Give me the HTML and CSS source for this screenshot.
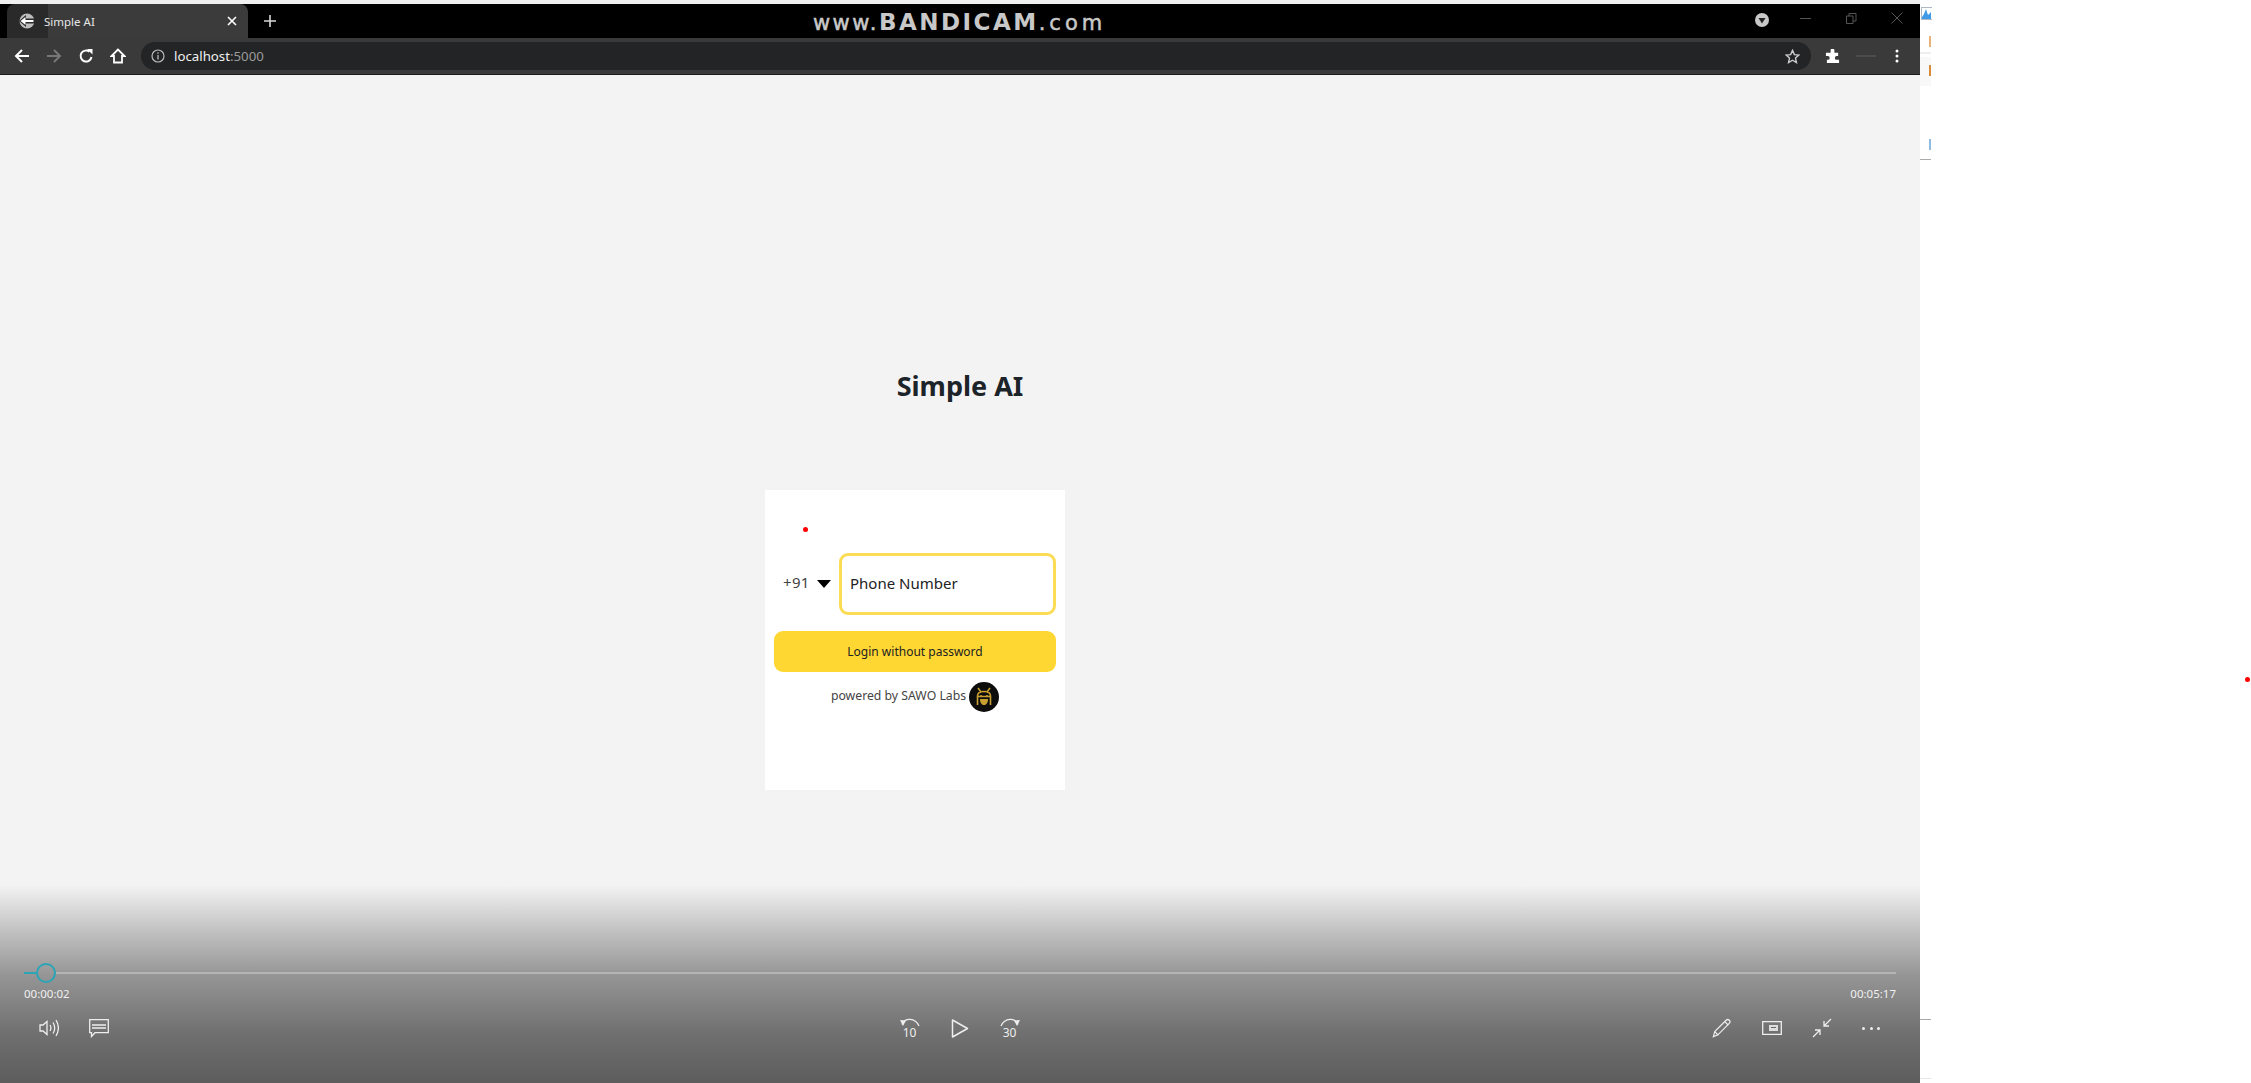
FILE: index.html
```html
<!DOCTYPE html>
<html lang="en">
<head>
    <meta charset="UTF-8">
    <title>Simple AI</title>
    <link rel="stylesheet" href="styles.css">
</head>
<body>
    <div class="screen">
        <div class="topline"></div>
        <div class="tabbar">
            <div class="tab">
                <svg class="tab-icon" width="16" height="16" viewBox="0 0 16 16"><circle cx="8" cy="8" r="7.500" fill="#bdbdbd"/><path d="M16 5.500H7V2L0 8l7 6v-3.500h9z" fill="#2a2a2a"/><path d="M1.500 8 6.500 4v3h8v2h-8v3z" fill="#fff"/></svg>
                <span class="tab-title">Simple AI</span>
                <svg class="tab-close" width="10" height="10" viewBox="0 0 10 10"><path d="M1 1l8 8M9 1 1 9" stroke="#fff" stroke-width="1.600"/></svg>
            </div>
            <svg class="tab-new" width="14" height="14" viewBox="0 0 14 14"><path d="M7 1v12M1 7h12" stroke="#d8d8d8" stroke-width="1.600"/></svg>
            <div class="watermark">www.<b>BANDICAM</b><span class="watermark-end">.com</span></div>
            <div class="win-btns">
                <svg class="win-drop" width="14" height="14" viewBox="0 0 14 14"><circle cx="7" cy="7" r="7" fill="#c8c8c8"/><path d="M3.500 5h7L7 10.500z" fill="#222"/></svg>
                <svg class="win-min" width="11" height="3" viewBox="0 0 11 3"><path d="M0 1.500h11" stroke="#555"/></svg>
                <svg class="win-max" width="11" height="11" viewBox="0 0 11 11"><path d="M.5 3h6.500v7.500H.5zM3 3V.5h7v7.500H7" fill="none" stroke="#555"/></svg>
                <svg class="win-close" width="12" height="12" viewBox="0 0 12 12"><path d="M.5.500l11 11M11.500.5l-11 11" stroke="#555"/></svg>
            </div>
        </div>
        <div class="toolbar">
            <svg class="tool" width="16" height="16" viewBox="0 0 16 16"><path d="M15 8H2M8 2 2 8l6 6" fill="none" stroke="#fff" stroke-width="2"/></svg>
            <svg class="tool" width="16" height="16" viewBox="0 0 16 16"><path d="M1 8h13M8 2l6 6-6 6" fill="none" stroke="#777" stroke-width="2"/></svg>
            <svg class="tool" width="16" height="16" viewBox="0 0 16 16"><path d="M13.500 9A5.500 5.500 0 1 1 11.500 3.700" fill="none" stroke="#fff" stroke-width="2"/><path d="M9 1h5.500v5.500z" fill="#fff"/></svg>
            <svg class="tool" width="16" height="16" viewBox="0 0 16 16"><path d="M8 1.500 1.500 8h2.500v6.500h8V8h2.500z" fill="none" stroke="#fff" stroke-width="1.800"/></svg>
            <div class="omnibox">
                <svg width="14" height="14" viewBox="0 0 14 14"><circle cx="7" cy="7" r="6" fill="none" stroke="#bbb" stroke-width="1.200"/><path d="M7 6v4.500M7 3.200v1.500" stroke="#bbb" stroke-width="1.300"/></svg>
                <span class="url">localhost<span class="url-port">:5000</span></span>
                <svg class="star" width="15" height="15" viewBox="0 0 16 16"><path d="M8 1.500l2 4.500 4.800.500-3.600 3.200 1 4.800L8 12l-4.200 2.500 1-4.800L1.200 6.500 6 6z" fill="none" stroke="#ccc" stroke-width="1.500"/></svg>
            </div>
            <svg class="ext" width="15" height="15" viewBox="0 0 16 16"><path d="M6 1.500a2 2 0 0 1 4 0V4h4v3.500h-1.500a2 2 0 0 0 0 4H15V15H2v-3.500h1a2 2 0 0 0 0-4H1V4h5z" fill="#fff"/></svg>
            <div class="ext-dash"></div>
            <svg class="menu" width="4" height="14" viewBox="0 0 4 14"><circle cx="2" cy="2" r="1.500" fill="#fff"/><circle cx="2" cy="7" r="1.500" fill="#fff"/><circle cx="2" cy="12" r="1.500" fill="#fff"/></svg>
        </div>
        <div class="page">
            <h1 class="title">Simple AI</h1>
            <div class="card">
                <div class="phone-row">
                    <span class="code">+91</span>
                    <span class="arrow"></span>
                    <div class="phone-input">Phone Number</div>
                </div>
                <button class="login">Login without password</button>
                <div class="powered">
                    <span class="powered-text">powered by SAWO Labs</span>
                    <svg width="30" height="30" viewBox="0 0 30 30"><circle cx="15" cy="15" r="15" fill="#0d0d0d"/><path d="M9 6l3 4M21 6l-3 4M8.500 23v-9c0-3 3-4.500 6.500-4.500s6.500 1.500 6.500 4.500v9M8.500 14.500h13M12 13v1M18 13v1" fill="none" stroke="#c9a030" stroke-width="1.600"/><path d="M11 17h8c0 4-2 6-4 6s-4-2-4-6z" fill="#c9a030"/></svg>
                </div>
            </div>
            <span class="pointer-dot pointer-card"></span>
        </div>
        <div class="player">
            <div class="seek">
                <span class="seek-done"></span>
                <span class="seek-thumb"></span>
                <span class="seek-rest"></span>
            </div>
            <div class="times">
                <span>00:00:02</span>
                <span>00:05:17</span>
            </div>
            <div class="controls">
                <div class="ctrl-group">
                    <svg width="20" height="18" viewBox="0 0 20 18"><path d="M1 6h3l4-3.500v13L4 12H1zM11 6c1.200 2 1.200 4 0 6M14 3.500c2.200 3.500 2.200 7.500 0 11M17 1c3 5 3 11 0 16" fill="none" stroke="#eee" stroke-width="1.300"/></svg>
                    <svg width="20" height="19" viewBox="0 0 20 19"><path d="M.7.700h18.600v13H6l-3.500 3.800v-3.800H.7zM3 6h14M3 9h14" fill="none" stroke="#eee" stroke-width="1.300"/></svg>
                </div>
                <div class="ctrl-group ctrl-mid">
                    <div class="skip">
                        <svg width="20" height="9" viewBox="0 0 20 9"><path d="M2 6.500C5-.5 15-.5 19 8" fill="none" stroke="#eee" stroke-width="1.300"/><path d="M0 2l6 .500-3 5.500z" fill="#eee"/></svg>
                        <span>10</span>
                    </div>
                    <svg width="18" height="19" viewBox="0 0 18 19"><path d="M1.500 1 16.500 9.500 1.500 18z" fill="none" stroke="#eee" stroke-width="1.500" stroke-linejoin="round"/></svg>
                    <div class="skip">
                        <svg width="20" height="9" viewBox="0 0 20 9"><path d="M18 6.500C15-.5 5-.5 1 8" fill="none" stroke="#eee" stroke-width="1.300"/><path d="M20 2l-6 .500 3 5.500z" fill="#eee"/></svg>
                        <span>30</span>
                    </div>
                </div>
                <div class="ctrl-group ctrl-right">
                    <svg width="20" height="20" viewBox="0 0 22 22"><path d="M1.500 20.500l1.500-5.500L15.500 2.500c1-1 2.500-1 3.500 0s1 2.500 0 3.500L6.500 18.500zM3 15l4 4M14 4l4 4" fill="none" stroke="#eee" stroke-width="1.300"/></svg>
                    <svg width="20" height="14" viewBox="0 0 20 14"><path d="M.7.700h18.600v12.600H.7z" fill="none" stroke="#eee" stroke-width="1.300"/><path d="M7 4h9v6H7z" fill="#ddd"/><path d="M9 6.500h5" stroke="#666"/></svg>
                    <svg width="20" height="20" viewBox="0 0 20 20"><path d="M19 1l-7 7M12 3v5h5M1 19l7-7M3 12h5v5" fill="none" stroke="#eee" stroke-width="1.300"/></svg>
                    <div class="dots"><i></i><i></i><i></i></div>
                </div>
            </div>
        </div>
    </div>
    <div class="side">
        <div class="side-chart">
            <svg width="9" height="11" viewBox="0 0 9 11"><path d="M0 9 2 6 4 1 6 7 9 4V11H0z" fill="#3f9be8"/></svg>
        </div>
        <span class="side-mark side-orange"></span>
        <div class="side-rule"></div>
        <div class="side-panel">
            <span class="side-mark side-mixed"></span>
        </div>
        <span class="side-mark side-blue"></span>
        <div class="side-line"></div>
        <div class="side-line side-line-low"></div>
        <div class="side-line side-line-end"></div>
    </div>
    <span class="pointer-dot pointer-side"></span>
</body>
</html>
```

FILE: styles.css
```css
* {
    box-sizing: border-box;
}
html, body {
    margin: 0;
    height: 100%;
    overflow: hidden;
}
body {
    display: flex;
    width: 2251px;
    height: 1083px;
    font-family: "Noto Sans", "Open Sans", sans-serif;
    background-color: #fff;
    position: relative;
}
.screen {
    width: 1920px;
    height: 1083px;
    display: flex;
    flex-direction: column;
    position: relative;
    background-color: #f3f3f3;
}
.topline {
    height: 4px;
    background-color: #f0f0f0;
}
.tabbar {
    height: 34px;
    background-color: #000;
    display: flex;
    align-items: flex-start;
    padding-left: 7px;
    position: relative;
}
.tab {
    width: 241px;
    height: 34px;
    background: linear-gradient(to right, #2a2a2a 41px, #3b3b3b 41px);
    border-radius: 8px 8px 0 0;
    display: flex;
    align-items: center;
}
.tab-icon {
    margin-left: 12px;
    flex-shrink: 0;
}
.tab-title {
    margin-left: 9px;
    font-size: 11.5px;
    color: #e6e6e6;
    flex: 1;
}
.tab-close {
    margin-right: 11px;
}
.tab-new {
    margin: 10px 0 0 15px;
}
.watermark {
    position: absolute;
    left: 813px;
    top: 0;
    color: #c8c8c8;
    font-family: "DejaVu Sans", sans-serif;
    font-size: 21px;
    line-height: 36px;
    letter-spacing: 2.4px;
    -webkit-text-stroke: 0.5px #c8c8c8;
    white-space: nowrap;
}
.watermark b {
    font-size: 23px;
    letter-spacing: 2.5px;
    -webkit-text-stroke: 0;
}
.watermark-end {
    letter-spacing: 4px;
}
.win-btns {
    margin-left: auto;
    display: flex;
    align-items: center;
    height: 34px;
}
.win-drop {
    margin: -2px 31px 0 0;
}
.win-min {
    margin: -6px 35px 0 0;
}
.win-max {
    margin: -6px 34px 0 0;
}
.win-close {
    margin: -6px 17px 0 0;
}
.toolbar {
    height: 37px;
    background-color: #3a3a3a;
    border-bottom: 1px solid #1c1c1c;
    display: flex;
    align-items: center;
    padding-left: 14px;
}
.tool {
    margin-right: 16px;
    flex-shrink: 0;
}
.omnibox {
    width: 1670px;
    height: 28px;
    margin-left: -1px;
    background-color: #232425;
    border-radius: 14px;
    display: flex;
    align-items: center;
    padding: 0 11px 0 10px;
    gap: 9px;
}
.url {
    font-size: 13.25px;
    color: #f0f0f0;
}
.url-port {
    color: #9a9a9a;
}
.star {
    margin-left: auto;
}
.ext {
    margin-left: 14px;
}
.ext-dash {
    width: 20px;
    height: 2px;
    margin-left: 16px;
    background-color: #4c4c4c;
}
.menu {
    margin-left: 19px;
}
.page {
    flex: 1;
    position: relative;
    display: flex;
    flex-direction: column;
    padding-top: 292px;
}
.title {
    margin: 0;
    width: 1920px;
    text-align: center;
    font-size: 27px;
    line-height: 38px;
    font-weight: 700;
    color: #1c2329;
}
.card {
    width: 300px;
    height: 300px;
    margin: 85px 0 0 765px;
    background-color: #fff;
    padding: 63px 9px 0;
}
.phone-row {
    display: flex;
    align-items: center;
    height: 62px;
}
.code {
    font-size: 15px;
    color: #444;
    margin: -4px 0 0 9px;
    letter-spacing: 0.3px;
}
.arrow {
    width: 0;
    height: 0;
    margin-left: 7px;
    border-left: 7.5px solid transparent;
    border-right: 7.5px solid transparent;
    border-top: 8px solid #000;
}
.phone-input {
    width: 217px;
    height: 62px;
    margin-left: auto;
    border: 3px solid #fbdc55;
    border-radius: 9px;
    padding: 0 0 2px 8px;
    display: flex;
    align-items: center;
    font-size: 15px;
    color: #222;
}
.login {
    display: block;
    width: 282px;
    height: 41px;
    margin-top: 16px;
    border: none;
    border-radius: 9px;
    background-color: #ffd733;
    font-family: inherit;
    font-size: 12px;
    color: #222;
}
.powered {
    display: flex;
    align-items: center;
    justify-content: center;
    gap: 3px;
    margin-top: 10px;
    font-size: 12.25px;
    color: #444;
}
.powered-text {
    margin-top: -3px;
}
.pointer-dot {
    position: absolute;
    width: 5px;
    height: 5px;
    border-radius: 50%;
    background-color: #f00;
}
.pointer-card {
    left: 803px;
    top: 452px;
}
.pointer-side {
    left: 2245px;
    top: 677px;
}
.player {
    position: absolute;
    left: 0;
    bottom: 0;
    width: 1920px;
    height: 198px;
    background: linear-gradient(to bottom, rgba(0, 0, 0, 0), rgba(0, 0, 0, 0.21) 24%, rgba(0, 0, 0, 0.39) 46%, rgba(0, 0, 0, 0.54) 75%, rgba(0, 0, 0, 0.62) 100%);
    padding: 78px 24px 0;
}
.seek {
    display: flex;
    align-items: center;
    height: 20px;
}
.seek-done {
    width: 12px;
    height: 2px;
    background-color: #2aa5b8;
}
.seek-thumb {
    width: 20px;
    height: 20px;
    border: 2px solid #2aa5b8;
    border-radius: 50%;
}
.seek-rest {
    flex: 1;
    height: 2px;
    background-color: #b5b5b5;
}
.times {
    display: flex;
    justify-content: space-between;
    margin-top: 3px;
    font-size: 11.5px;
    line-height: 16px;
    color: #f0f0f0;
}
.controls {
    display: flex;
    justify-content: space-between;
    align-items: center;
    height: 20px;
    margin-top: 16px;
    padding: 0 16px 0 15px;
}
.ctrl-group {
    display: flex;
    align-items: center;
    gap: 30px;
    width: 300px;
}
.ctrl-mid {
    justify-content: center;
    gap: 31px;
}
.ctrl-right {
    justify-content: flex-end;
}
.skip {
    width: 20px;
    display: flex;
    flex-direction: column;
    align-items: center;
    font-size: 12px;
    line-height: 11px;
    color: #eee;
}
.dots {
    display: flex;
    justify-content: space-between;
    width: 18px;
}
.dots i {
    width: 3px;
    height: 3px;
    border-radius: 50%;
    background-color: #eee;
}
.side {
    width: 331px;
    height: 1083px;
    display: flex;
    flex-direction: column;
}
.side-chart {
    width: 11px;
    height: 13px;
    margin: 7px 0 0 1px;
    border: 1px solid #b0b8c4;
    border-right: none;
    overflow: hidden;
}
.side-chart svg {
    display: block;
}
.side-mark {
    display: block;
    width: 2px;
    height: 11px;
    margin-left: 9px;
}
.side-orange {
    margin-top: 16px;
    background-color: #e8b27a;
}
.side-rule {
    width: 11px;
    height: 2px;
    margin-top: 5px;
    background-color: #eee;
}
.side-panel {
    width: 11px;
    height: 29px;
    margin-top: 3px;
    padding-top: 8px;
    background-color: #f8f8f8;
}
.side-mixed {
    background-color: #d98a3a;
}
.side-blue {
    margin-top: 53px;
    background-color: #8fbce0;
}
.side-line {
    width: 11px;
    height: 1px;
    margin-top: 9px;
    background-color: #aaa;
}
.side-line-low {
    margin-top: 859px;
}
.side-line-end {
    margin-top: 58px;
    background-color: #e6e6e6;
}
```
